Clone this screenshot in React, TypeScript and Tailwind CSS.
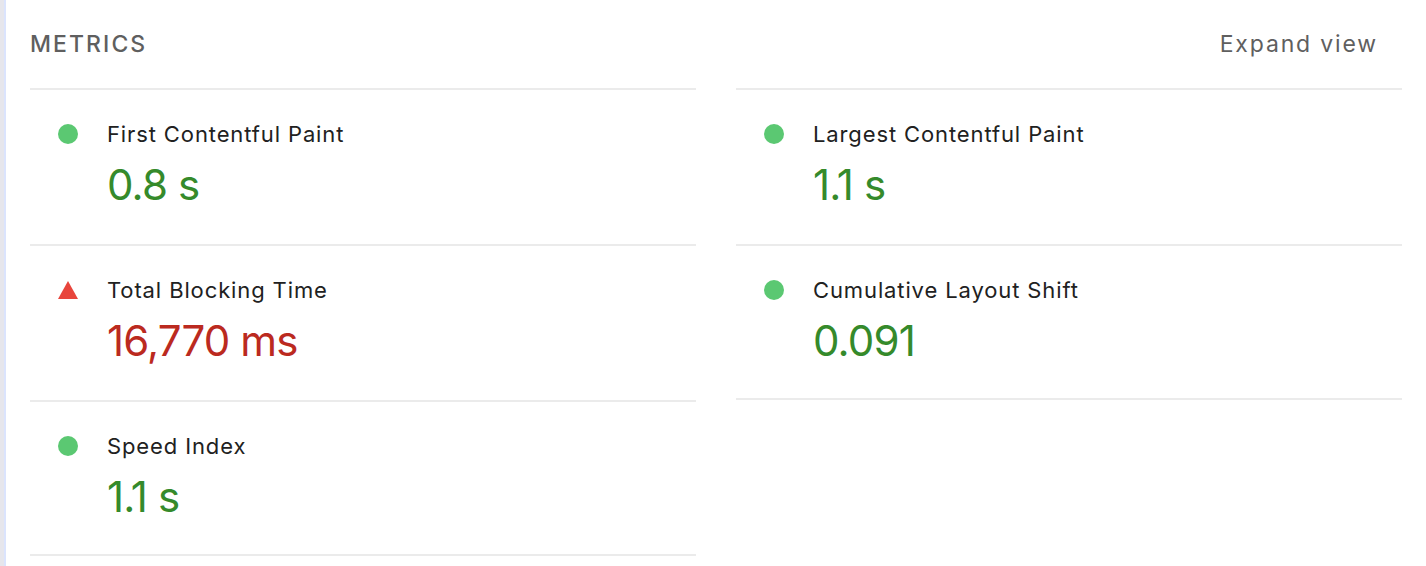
import React from 'react';

interface Metric {
  title: string;
  value: string;
  status: 'pass' | 'fail';
}

const leftMetrics: Metric[] = [
  { title: 'First Contentful Paint', value: '0.8 s', status: 'pass' },
  { title: 'Total Blocking Time', value: '16,770 ms', status: 'fail' },
  { title: 'Speed Index', value: '1.1 s', status: 'pass' },
];

const rightMetrics: Metric[] = [
  { title: 'Largest Contentful Paint', value: '1.1 s', status: 'pass' },
  { title: 'Cumulative Layout Shift', value: '0.091', status: 'pass' },
];

function StatusIcon({ status }: { status: Metric['status'] }) {
  if (status === 'fail') {
    return (
      <svg width="20" height="18" viewBox="0 0 20 18">
        <polygon points="10,0 20,18 0,18" fill="#e8453c" />
      </svg>
    );
  }
  return <div className="w-5 h-5 rounded-full bg-[#5bc872]" />;
}

function MetricRow({ metric, last }: { metric: Metric; last?: boolean }) {
  return (
    <div className={`border-t-2 border-[#ebebeb] pt-[30px] ${last ? 'h-[154px]' : 'h-[156px]'}`}>
      <div className="flex items-center h-7">
        <div className="w-[77px] pl-[28px] flex items-center">
          <StatusIcon status={metric.status} />
        </div>
        <span className="text-[22px] tracking-[0.04em] text-[#212121]">{metric.title}</span>
      </div>
      <div
        className={`pl-[77px] mt-[15px] text-[42px] leading-[44px] tracking-[-0.02em] ${
          metric.status === 'fail' ? 'text-[#bb2a1f]' : 'text-[#358a2b]'
        }`}
      >
        {metric.value}
      </div>
    </div>
  );
}

export default function App() {
  return (
    <div className="flex h-screen min-h-[566px] bg-white font-['Inter',sans-serif] overflow-hidden">
      {/* Left rail */}
      <div className="flex shrink-0">
        <div className="w-1 bg-[#e6e6ec]" />
        <div className="w-[2px] bg-[#dbe4fd]" />
      </div>

      <div className="flex-1 px-6">
        {/* Header */}
        <div className="h-[88px] flex items-center justify-between">
          <h2 className="text-[23px] tracking-[0.09em] text-[#5f5f5f] font-medium">METRICS</h2>
          <span className="pr-[24px] text-[23px] tracking-[0.08em] text-[#5f5f5f]">Expand view</span>
        </div>

        {/* Metrics grid */}
        <div className="grid grid-cols-2 gap-x-10">
          <div className="border-b-2 border-[#ebebeb]">
            {leftMetrics.map((m, i) => (
              <MetricRow key={m.title} metric={m} last={i === leftMetrics.length - 1} />
            ))}
          </div>
          <div className="self-start border-b-2 border-[#ebebeb]">
            {rightMetrics.map((m, i) => (
              <MetricRow key={m.title} metric={m} last={i === rightMetrics.length - 1} />
            ))}
          </div>
        </div>
      </div>
    </div>
  );
}
